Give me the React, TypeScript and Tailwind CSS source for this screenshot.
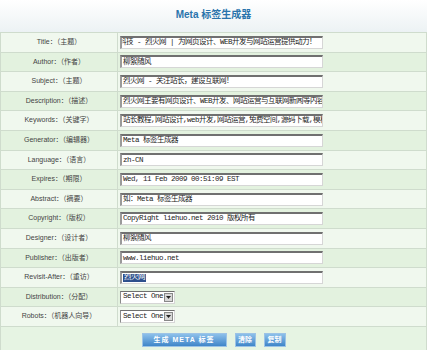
import React from 'react';

type Row = { label: string; value?: string; kind?: 'text' | 'select' | 'selected'; shift?: boolean };

const rows: Row[] = [
  { label: 'Title：（主题）', value: '科技 - 烈火网 | 为网页设计、WEB开发与网站运营提供动力！', shift: true },
  { label: 'Author：（作者）', value: '柳絮随风' },
  { label: 'Subject：（主题）', value: '烈火网 - 关注站长，建设互联网！' },
  { label: 'Description：（描述）', value: '烈火网主要有网页设计、WEB开发、网站运营与互联网新闻等内容' },
  { label: 'Keywords：（关键字）', value: '站长教程,网站设计,web开发,网站运营,免费空间,源码下载,模板' },
  { label: 'Generator：（编辑器）', value: 'Meta 标签生成器' },
  { label: 'Language：（语言）', value: 'zh-CN' },
  { label: 'Expires：（期限）', value: 'Wed, 11 Feb 2009 00:51:09 EST' },
  { label: 'Abstract：（摘要）', value: '如：Meta 标签生成器' },
  { label: 'Copyright：（版权）', value: 'CopyRight liehuo.net 2010 版权所有' },
  { label: 'Designer：（设计者）', value: '柳絮随风' },
  { label: 'Publisher：（出版者）', value: 'www.liehuo.net' },
  { label: 'Revisit-After：（重访）', value: '烈火网', kind: 'selected' },
  { label: 'Distribution：（分配）', kind: 'select' },
  { label: 'Robots：（机器人向导）', kind: 'select' },
];

const inputFont = { fontFamily: '"Liberation Mono", "Noto Sans CJK SC", monospace' };

function Field({ row }: { row: Row }) {
  if (row.kind === 'select') {
    return (
      <div
        className="flex h-[13px] w-[55px] items-center justify-between whitespace-nowrap border border-t-[#6f6f6f] border-l-[#8a8a8a] border-b-[#d6d6d6] border-r-[#d6d6d6] bg-white pl-[2px] pr-[1px] text-[7.5px] leading-none tracking-[-0.5px] text-[#222]"
        style={inputFont}
      >
        <span>Select One</span>
        <span className="flex h-[9px] w-[9px] shrink-0 items-center justify-center border border-[#888] bg-[#d8d8d8]">
          <svg width="5" height="3" viewBox="0 0 5 3">
            <path d="M0 0h5L2.5 3z" fill="#222" />
          </svg>
        </span>
      </div>
    );
  }
  return (
    <div
      className="flex h-[13px] w-[203px] items-center overflow-hidden whitespace-nowrap border-t-2 border-l-2 border-b border-r border-t-[#707070] border-l-[#9a9a9a] border-b-[#d6d6d6] border-r-[#d6d6d6] bg-white pl-[1px] text-[7.5px] leading-none tracking-[-0.5px] text-[#222]"
      style={inputFont}
    >
      {row.kind === 'selected' ? (
        <span className="bg-[#2d4f8c] px-[1px] text-white">{row.value}</span>
      ) : (
        <span className={row.shift ? '-ml-[4px]' : ''}>{row.value}</span>
      )}
    </div>
  );
}

export default function App() {
  return (
    <div className="h-[350px] w-[427px] overflow-hidden bg-white" style={{ fontFamily: '"Liberation Sans", "Noto Sans CJK SC", sans-serif' }}>
      <div className="flex h-[32px] items-center justify-center bg-gradient-to-b from-white to-[#ecf2f4] pb-[4px]">
        <h1 className="text-[10px] font-bold text-[#2a74ac]">Meta 标签生成器</h1>
      </div>
      <div className="border-t border-l border-r border-[#cfdccd]">
        {rows.map((row, i) => (
          <div
            key={row.label}
            className={`flex h-[19.6px] border-b border-[#cfdccd] ${i % 2 === 0 ? 'bg-[#f0f8ee]' : 'bg-[#e3f2df]'}`}
          >
            <div className="flex w-[117px] shrink-0 items-center justify-center border-r border-[#cfdccd] text-[7px] text-[#444]">
              {row.label}
            </div>
            <div className="flex flex-1 items-center pl-[2px]">
              <Field row={row} />
            </div>
          </div>
        ))}
        <div className="flex h-[30px] items-start justify-center gap-[8px] bg-[#e6f4e3] pt-[6px]">
          <button className="h-[14px] w-[85px] border border-[#9cc3e6] bg-gradient-to-b from-[#8cc0ea] to-[#3f86c9] text-[7px] font-bold tracking-[1px] text-white">
            生成 META 标签
          </button>
          <button className="h-[14px] w-[21px] border border-[#9cc3e6] bg-gradient-to-b from-[#8cc0ea] to-[#3f86c9] text-[7px] font-bold text-white">
            清除
          </button>
          <button className="h-[14px] w-[22px] border border-[#9cc3e6] bg-gradient-to-b from-[#8cc0ea] to-[#3f86c9] text-[7px] font-bold text-white">
            复制
          </button>
        </div>
      </div>
    </div>
  );
}
